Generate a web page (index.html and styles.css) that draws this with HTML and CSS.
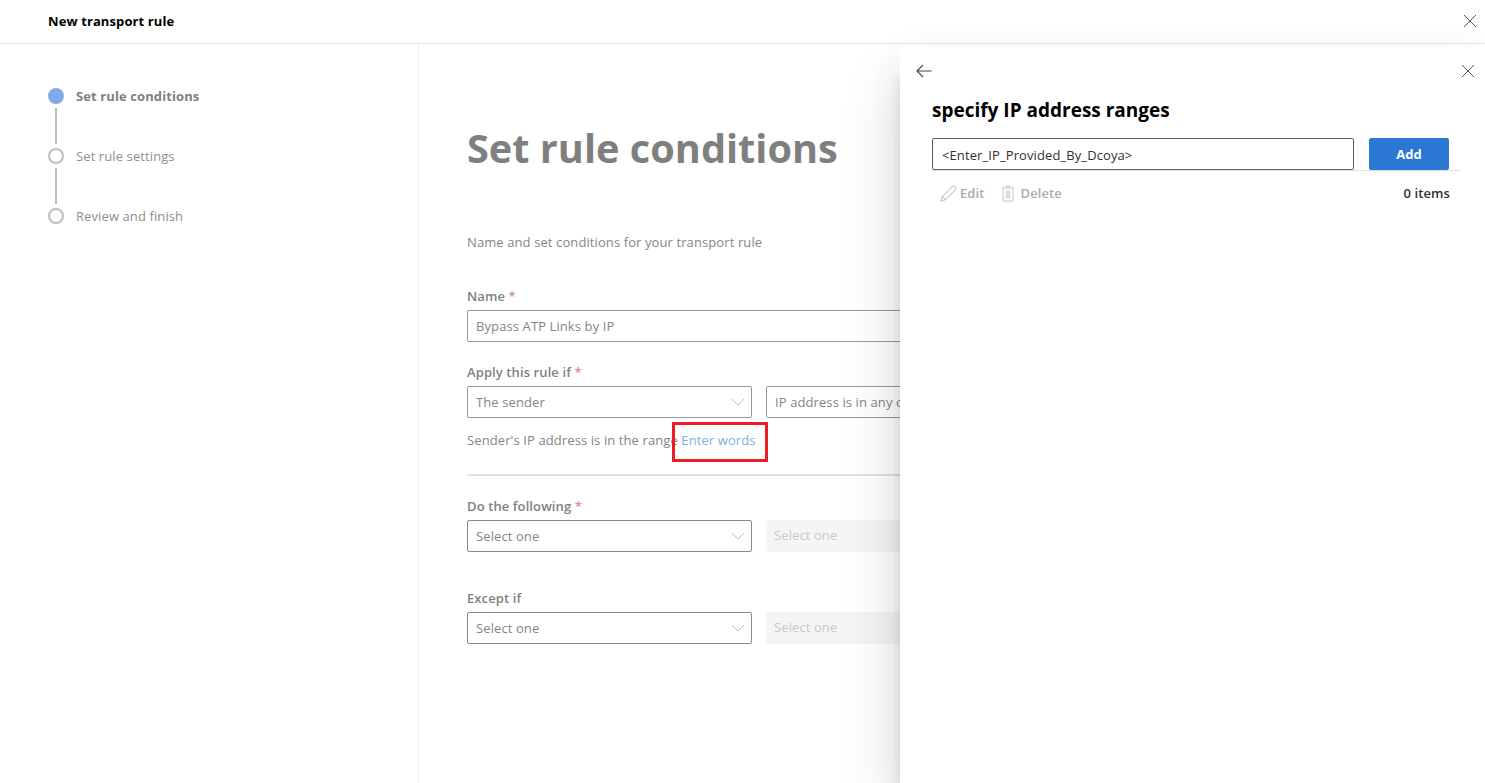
FILE: index.html
```html
<!DOCTYPE html>
<html lang="en">
<head>
  <meta charset="UTF-8">
  <title>New transport rule</title>
  <link rel="stylesheet" href="styles.css">
</head>
<body>
  <header class="topbar">
    <div class="topbar-title">New transport rule</div>
    <svg class="close-icon topbar-close" viewBox="0 0 14 14"><path d="M1 1l12 12M13 1L1 13"/></svg>
  </header>

  <div class="layout">
    <aside class="steps">
      <div class="step step-active"><span class="step-dot"></span><span>Set rule conditions</span></div>
      <div class="step-line"></div>
      <div class="step"><span class="step-dot"></span><span>Set rule settings</span></div>
      <div class="step-line"></div>
      <div class="step"><span class="step-dot"></span><span>Review and finish</span></div>
    </aside>

    <main class="content">
      <h1 class="page-title">Set rule conditions</h1>
      <p class="page-desc">Name and set conditions for your transport rule</p>

      <label class="field-label">Name <span class="req">*</span></label>
      <div class="input input-wide">Bypass ATP Links by IP</div>

      <label class="field-label label-apply">Apply this rule if <span class="req">*</span></label>
      <div class="row">
        <div class="input select">The sender
          <svg class="chevron" viewBox="0 0 16 9"><path d="M1 1l7 7 7-7"/></svg>
        </div>
        <div class="input select-second">IP address is in any of these ranges</div>
      </div>
      <div class="range-line">Sender's IP address is in the range <a class="link">Enter words</a><span class="callout"></span></div>

      <hr class="divider">

      <label class="field-label">Do the following <span class="req">*</span></label>
      <div class="row">
        <div class="input select select-dark">Select one
          <svg class="chevron" viewBox="0 0 16 9"><path d="M1 1l7 7 7-7"/></svg>
        </div>
        <div class="input-disabled">Select one</div>
      </div>

      <label class="field-label label-except">Except if</label>
      <div class="row">
        <div class="input select select-dark">Select one
          <svg class="chevron" viewBox="0 0 16 9"><path d="M1 1l7 7 7-7"/></svg>
        </div>
        <div class="input-disabled">Select one</div>
      </div>
    </main>
  </div>

  <section class="panel">
    <div class="panel-nav">
      <svg class="back-icon" viewBox="0 0 16 14"><path d="M15.5 7H1M7 1L1 7l6 6"/></svg>
      <svg class="close-icon" viewBox="0 0 14 14"><path d="M1 1l12 12M13 1L1 13"/></svg>
    </div>
    <h2 class="panel-title">specify IP address ranges</h2>
    <div class="panel-form">
      <div class="ip-input">&lt;Enter_IP_Provided_By_Dcoya&gt;</div>
      <button class="btn-add">Add</button>
    </div>
    <div class="toolbar">
      <span class="tool">
        <svg class="icon-edit" viewBox="0 0 16 16"><path d="M1 15l1-4L11.5 1.5a1.6 1.6 0 0 1 2.6 0.4 1.6 1.6 0 0 1 .4 2.6L5 14zM2 11l3 3"/></svg>
        Edit
      </span>
      <span class="tool">
        <svg class="icon-delete" viewBox="0 0 14 17"><path d="M1 3h12M5 3V1h4v2M2 3v13h10V3"/><rect x="4.5" y="5.5" width="5" height="8"/></svg>
        Delete
      </span>
      <span class="item-count">0 items</span>
    </div>
  </section>
</body>
</html>
```

FILE: styles.css
```css
html, body {
  height: 100%;
  margin: 0;
  padding: 0;
  overflow: hidden;
}
body {
  font-family: 'Open Sans', 'Noto Sans', sans-serif;
  font-size: 13px;
  letter-spacing: .1px;
  color: #858585;
  background: #fff;
}
.topbar {
  height: 43px;
  border-bottom: 1px solid #e8e8e8;
  display: flex;
  align-items: center;
  justify-content: space-between;
  padding: 0 8px 0 48px;
}
.topbar-title {
  font-size: 13px;
  font-weight: 700;
  color: #000;
  margin-top: -2px;
}
.close-icon {
  width: 14px;
  height: 14px;
  fill: none;
  stroke: #555;
  stroke-width: 1;
}
.topbar-close { margin-top: -1px; }

.layout {
  display: flex;
  height: 739px;
}
.steps {
  width: 370px;
  flex: none;
  padding: 44px 0 0 48px;
  border-right: 1px solid #ececec;
}
.step {
  display: flex;
  align-items: center;
  gap: 12px;
  height: 16px;
  color: #8f8f8f;
}
.step-active {
  font-weight: 700;
  color: #7f7f7f;
}
.step-dot {
  width: 16px;
  height: 16px;
  box-sizing: border-box;
  border: 2px solid #bdbdbd;
  border-radius: 50%;
}
.step-active .step-dot {
  background: #7dabe8;
  border-color: #7dabe8;
}
.step-line {
  width: 2px;
  height: 36px;
  margin: 4px 0 4px 7px;
  background: #bdbdbd;
}

.content {
  flex: 1;
  padding: 0 0 0 48px;
}
.page-title {
  margin: 78px 0 0;
  font-size: 39.7px;
  line-height: 52px;
  font-weight: 700;
  letter-spacing: 0;
  color: #7f7f7f;
}
.page-desc {
  margin: 59px 0 0;
  line-height: 18px;
  color: #858585;
}
.field-label {
  display: block;
  margin-top: 36px;
  margin-bottom: 5px;
  line-height: 18px;
  font-weight: 600;
  color: #808080;
}
.label-apply { margin-top: 21px; }
.label-except { margin-top: 37px; }
.req { color: #d98c8c; }
.input {
  height: 32px;
  box-sizing: border-box;
  border: 1px solid #999;
  border-radius: 2px;
  padding: 0 8px;
  line-height: 30px;
  white-space: nowrap;
  overflow: hidden;
  color: #858585;
}
.input-wide { width: 600px; }
.row {
  display: flex;
  gap: 14px;
  width: 600px;
}
.select {
  position: relative;
  width: 285px;
  flex: none;
}
.select-dark { border-color: #8a8a8a; }
.select-second { flex: 1; }
.chevron {
  position: absolute;
  right: 6px;
  top: 11px;
  width: 14px;
  height: 8px;
  fill: none;
  stroke: #b5b5b5;
}
.input-disabled {
  flex: 1;
  height: 32px;
  padding: 0 8px;
  line-height: 30px;
  border-radius: 2px;
  background: #f5f5f5;
  color: #c8c8c8;
}
.range-line {
  position: relative;
  margin-top: 13px;
  line-height: 18px;
  color: #858585;
  white-space: nowrap;
}
.link { color: #82aee8; }
.callout {
  position: absolute;
  left: 205px;
  top: -9px;
  width: 96px;
  height: 40px;
  box-sizing: border-box;
  border: 3px solid #ed1c24;
}
.divider {
  width: 600px;
  height: 2px;
  margin: 25px 0 0;
  border: 0;
  background: #e0e0e0;
}
.divider + .field-label { margin-top: 21px; }

.panel {
  position: absolute;
  left: 900px;
  right: 0;
  top: 47px;
  bottom: 0;
  background: #fff;
  box-shadow: -8px 30px 50px rgba(0, 0, 0, 0.12), -1px 30px 10px rgba(0, 0, 0, 0.1), 0 0 40px rgba(0, 0, 0, 0.03);
  color: #000;
}
.panel-nav {
  display: flex;
  justify-content: space-between;
  align-items: center;
  padding: 17px 10px 0 16px;
}
.back-icon {
  width: 16px;
  height: 14px;
  fill: none;
  stroke: #444;
  stroke-width: 1.1;
}
.panel-title {
  margin: 20px 0 0 32px;
  font-size: 19px;
  line-height: 24px;
  font-weight: 700;
  letter-spacing: 0;
  color: #000;
}
.panel-form {
  display: flex;
  gap: 15px;
  margin: 16px 24px 0 32px;
  padding-right: 12px;
  border-bottom: 1px solid #e1e1e1;
}
.ip-input {
  flex: 1;
  height: 32px;
  box-sizing: border-box;
  border: 1px solid #605e5c;
  border-radius: 2px;
  padding: 0 9px;
  line-height: 32px;
  color: #323130;
}
.btn-add {
  width: 80px;
  height: 32px;
  border: 0;
  border-radius: 2px;
  background: #2b78d4;
  color: #fff;
  font: 700 13px 'Open Sans', 'Noto Sans', sans-serif;
}
.toolbar {
  display: flex;
  align-items: center;
  gap: 16px;
  margin: 13px 35px 0 40px;
  height: 18px;
}
.tool {
  display: flex;
  align-items: center;
  gap: 3px;
  font-weight: 600;
  color: #ababab;
}
.tool svg {
  fill: none;
  stroke: #c4c4c4;
}
.icon-edit {
  width: 17px;
  height: 17px;
}
.icon-delete {
  width: 14px;
  height: 17px;
  margin-right: 3px;
}
.icon-delete rect { fill: #dedede; stroke: none; }
.item-count {
  margin-left: auto;
  font-weight: 600;
  color: #323130;
}
```
